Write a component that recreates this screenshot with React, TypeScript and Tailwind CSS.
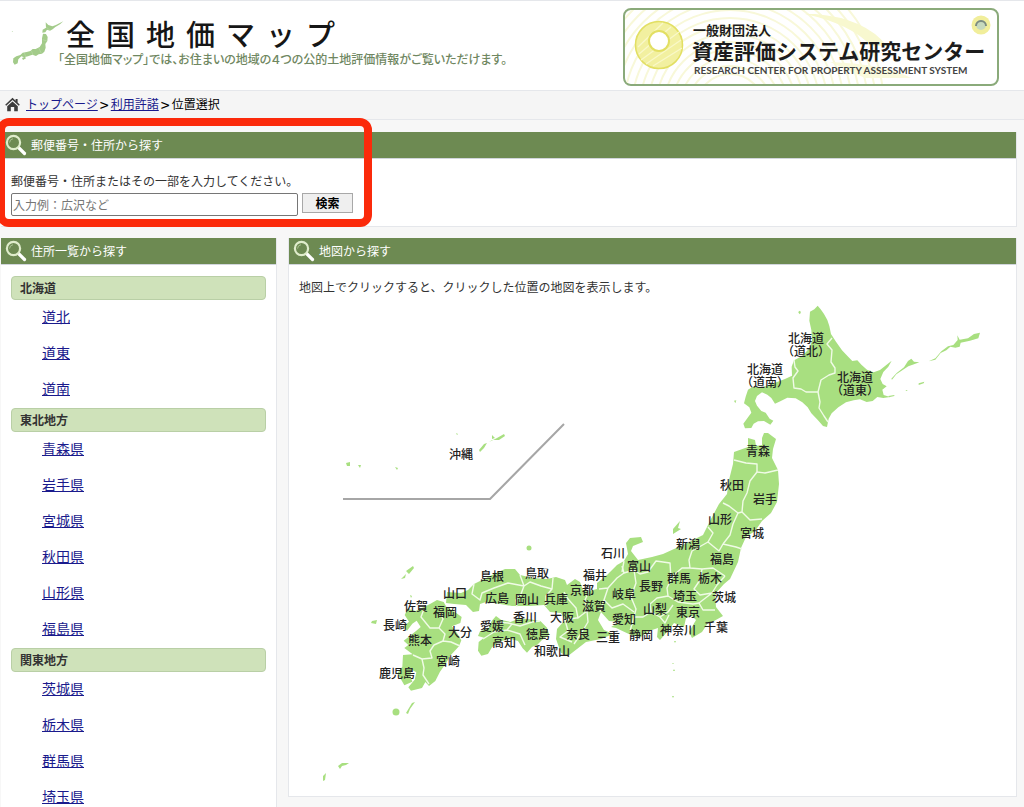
import React from 'react';

const regions = [
  { name: '北海道', areas: ['道北', '道東', '道南'] },
  { name: '東北地方', areas: ['青森県', '岩手県', '宮城県', '秋田県', '山形県', '福島県'] },
  { name: '関東地方', areas: ['茨城県', '栃木県', '群馬県', '埼玉県'] },
];

// label centre on the map canvas; an optional second line goes 13 below
const labels: [string, number, number, string?][] = [
  ['北海道', 806, 337, '（道北）'],
  ['北海道', 765, 368, '（道南）'],
  ['北海道', 855, 376, '（道東）'],
  ['沖縄', 461, 453], ['青森', 758, 450], ['秋田', 732, 484], ['岩手', 765, 498],
  ['山形', 720, 518], ['宮城', 752, 532], ['新潟', 688, 543], ['福島', 722, 558],
  ['石川', 613, 552], ['富山', 639, 565], ['福井', 595, 574], ['長野', 651, 585],
  ['群馬', 679, 577], ['栃木', 710, 577], ['京都', 582, 589], ['岐阜', 624, 593],
  ['埼玉', 685, 595], ['茨城', 724, 596], ['滋賀', 594, 605], ['山梨', 655, 608],
  ['東京', 688, 611], ['愛知', 624, 618], ['千葉', 716, 626], ['神奈川', 678, 629],
  ['静岡', 641, 634], ['三重', 608, 636], ['奈良', 578, 633], ['和歌山', 552, 650],
  ['鳥取', 537, 572], ['島根', 492, 575], ['広島', 497, 597], ['岡山', 527, 598],
  ['兵庫', 556, 598], ['山口', 455, 592], ['香川', 525, 616], ['大阪', 562, 616],
  ['愛媛', 492, 625], ['徳島', 538, 633], ['高知', 504, 641], ['佐賀', 416, 605],
  ['福岡', 445, 611], ['長崎', 395, 624], ['熊本', 420, 639], ['大分', 460, 631],
  ['宮崎', 448, 660], ['鹿児島', 397, 672],
];

const GlassIcon = () => (
  <svg width="22" height="22" viewBox="0 0 22 22" fill="none" aria-hidden="true">
    <path d="M13.5 13.5 L19.5 19.5" stroke="#fff" strokeWidth="3.2" strokeLinecap="round" />
    <circle cx="8.5" cy="8.5" r="6.6" fill="#6d8a52" stroke="#dfeccb" strokeWidth="2.2" />
    <path d="M4.6 8.6 A4 4 0 0 1 8 4.7" stroke="#a9c191" strokeWidth="1" />
  </svg>
);

const PanelTitle = ({ children }: { children: React.ReactNode }) => (
  <h2 className="flex h-[27px] items-center gap-1 border-b border-gray-300 bg-[#6d8a52] pl-1 text-xs font-normal text-white">
    <GlassIcon />
    {children}
  </h2>
);

const SiteLogo = () => (
  <svg width="57" height="48" viewBox="30 20 171 144" aria-hidden="true">
    <g fill="#a3cb8a">
      <path d="M137 36 L145 44 L157 48 L168 44 L178 39 L190 33 L180 42 L166 50 L158 57 L150 61 L141 58 L136 66 L127 67 L128 58 L138 52 Z" />
      <path d="M129 70 L138 71 L143 80 L142 92 L136 101 L137 112 L133 124 L126 130 L116 132 L108 137 L97 133 L84 138 L72 141 L64 138 L55 147 L53 159 L44 163 L39 156 L40 144 L49 138 L61 134 L68 127 L80 125 L91 122 L98 116 L107 116 L119 110 L126 99 L126 84 Z" />
      <path d="M66 143 L75 139 L78 144 L69 149 Z M35 63 L38 62 L38 65 Z" />
    </g>
    <path d="M128 88 L141 92 M116 112 L124 129 M94 121 L99 134 M73 127 L77 139 M138 50 L150 60" stroke="#cfe6c0" fill="none" />
  </svg>
);

const CenterBanner = () => (
  <a
    href="#center"
    className="relative block h-[78px] w-[376px] shrink-0 overflow-hidden rounded-lg border-2 border-[#8aaa7a] bg-white text-[#1c1c1c]"
  >
    <svg className="absolute inset-0" width="372" height="74" viewBox="0 0 372 74" fill="none" aria-hidden="true">
      <g stroke="#f8f8d9" strokeWidth="2">
        {[34, 42, 50, 58, 66, 74, 82, 90, 98, 106, 114, 122, 130, 138, 146, 154].map((r) => (
          <circle key={r} cx="105" cy="98" r={r} />
        ))}
      </g>
      <path d="M190 4 Q240 8 262 36 L246 36 Q226 14 180 4 Z" fill="#f8f8cf" />
      <path d="M205 52 Q260 54 286 68 L240 68 Z" fill="#fafadc" />
      <circle cx="34" cy="35" r="23.5" fill="#f2f0a0" stroke="#e2df63" strokeWidth="1.6" />
      <g stroke="#f9f8c8" strokeWidth="1.3">
        <path d="M14 44 L46 17 M16 50 L54 22 M21 54 L56 30 M28 56 L57 38 M13 37 L38 13" />
      </g>
      <circle cx="34" cy="31" r="10" fill="#fff" stroke="#e2df63" strokeWidth="2" />
      <circle cx="356" cy="15" r="9.5" fill="#f1ee9b" />
      <circle cx="356" cy="15" r="5" fill="#c6d9bd" />
      <path d="M351 16 A5 5 0 0 1 361 16" stroke="#7c8c80" strokeWidth="2" />
    </svg>
    <span className="relative block pl-[68px] pt-3 text-[13px] leading-4 font-bold">一般財団法人</span>
    <span className="relative block pl-[67px] text-[21px] leading-6 font-bold whitespace-nowrap">
      資産評価システム研究センター
    </span>
    <span className="relative block pl-[69px] font-[Lato,sans-serif] text-[10px] leading-4 font-bold whitespace-nowrap text-[#444]">
      RESEARCH CENTER FOR PROPERTY ASSESSMENT SYSTEM
    </span>
  </a>
);

const JapanMap = () => (
  <svg
    className="block w-full"
    viewBox="289 297 727 499"
    role="img"
    aria-label="日本地図"
    strokeLinejoin="round"
  >
    <g fill="#a8df80">
      {/* Hokkaido and the northern islands */}
      <g transform="translate(720 290) scale(.33333)">
        <path d="M293 47 L302 58 L312 72 L322 90 L328 108 L333 132 L348 155 L366 181 L386 202 L397 213 L412 211 L425 225 L441 239 L461 247 L480 240 L498 226 L515 212 L505 230 L490 246 L481 267 L488 282 L500 289 L487 299 L491 315 L510 321 L490 324 L472 321 L458 333 L440 336 L420 328 L401 331 L378 337 L355 352 L335 370 L326 386 L321 411 L309 408 L294 391 L274 370 L263 352 L247 337 L227 325 L202 323 L181 334 L165 341 L154 324 L142 314 L126 307 L111 318 L105 333 L111 347 L124 363 L137 368 L149 386 L160 392 L151 404 L132 393 L114 394 L101 401 L94 414 L75 415 L70 401 L83 383 L94 368 L88 352 L72 340 L77 320 L84 299 L97 291 L128 292 L163 279 L195 267 L216 257 L215 230 L222 211 L247 198 L269 174 L276 150 L274 120 L268 92 L270 65 L283 58 Z" />
        <path d="M514 266 L530 249 L552 232 L564 213 L574 206 L582 215 L598 217 L582 223 L565 229 L548 240 L529 253 L516 269 Z" />
        <path d="M626 214 L646 205 L664 184 L684 169 L700 165 L713 150 L712 136 L719 149 L744 145 L762 132 L780 128 L775 145 L750 152 L722 158 L719 170 L706 173 L691 170 L679 181 L662 189 L646 209 Z" />
        <path d="M596 280 L613 275 L611 280 L596 285 Z M505 318 L523 315 L523 318 L507 322 Z M42 332 L49 331 L46 340 Z M232 43 L235 46 M237 62 L243 65 L240 73 L235 68 Z M556 300 L563 300 L560 303 Z" />
      </g>
      {/* Honshu */}
      <path d="M748 438 L755 440 L756 446 L762 445 L762 438 L764 433 L768 433 L776 439 L773 449 L772 458 L778 470 L779 484 L777 502 L771 513 L762 521 L755 531 L746 537 L741 548 L738 562 L730 579 L724 584 L715 594 L716 607 L723 616 L714 621 L708 623 L702 632 L692 638 L689 632 L696 620 L692 616 L686 618 L684 627 L674 623 L668 631 L660 640 L657 637 L658 628 L649 631 L641 637 L631 635 L616 628 L611 627 L620 622 L609 621 L601 612 L598 620 L604 630 L613 634 L601 639 L586 642 L577 649 L568 656 L561 653 L556 639 L557 629 L565 620 L561 613 L550 612 L544 605 L530 606 L512 606 L500 604 L486 602 L480 604 L479 611 L473 612 L466 605 L454 604 L446 603 L447 592 L461 593 L468 590 L474 584 L482 580 L496 573 L505 569 L515 569 L520 575 L533 578 L547 579 L556 577 L565 580 L567 585 L575 579 L580 582 L583 590 L589 591 L597 589 L597 583 L607 575 L617 565 L624 561 L628 554 L626 543 L630 538 L641 537 L643 542 L633 546 L631 551 L638 560 L652 557 L663 554 L674 549 L687 543 L703 535 L711 519 L719 504 L727 494 L729 480 L733 464 L734 452 L748 447 Z" />
      {/* Shikoku */}
      <path transform="translate(420 540) scale(.33333)" d="M180 274 L206 264 L215 243 L228 228 L244 240 L272 246 L298 235 L330 238 L362 244 L381 263 L388 284 L366 300 L352 314 L336 321 L321 338 L308 325 L294 303 L270 296 L237 305 L216 322 L204 342 L184 347 L174 332 L176 306 L192 293 L174 288 Z" />
      {/* Kyushu */}
      <path transform="translate(360 530) scale(.33333)" d="M190 232 L210 222 L231 210 L251 216 L259 230 L290 250 L305 261 L301 279 L276 289 L293 312 L304 331 L297 349 L272 376 L258 400 L240 425 L226 453 L207 468 L196 456 L186 474 L153 482 L145 472 L164 449 L169 427 L155 419 L151 438 L157 455 L133 466 L121 445 L112 430 L127 410 L129 375 L158 373 L133 354 L145 345 L131 332 L152 316 L169 302 L182 291 L170 272 L157 281 L141 302 L130 290 L147 275 L134 255 L143 236 L167 243 Z" />
      {/* Sado, Tsushima, Okinawa and the small islands */}
      <path d="M673 529 L680 521 L678 528 L681 529 L673 534 Z" />
      <path d="M401 579 L406 574 L405 578 Z M406 571 L413 566 L414 568 L409 574 Z M410 595 L412 596 L411 598 Z" />
      <circle cx="529" cy="548" r="2.5" />
      <circle cx="396" cy="712" r="3.5" />
      <path d="M406 713 L412 703 L415 702 L410 709 L408 714 Z M372 621 L377 620 L376 624 L371 623 Z" />
      <path d="M338 766 L342 763 L349 763 L346 765 L342 766 L340 769 Z M323 776 L326 773 L325 780 L323 781 Z" />
      <path d="M479 450 L484 444 L487 443 L484 448 L480 452 Z M489 442 L497 438 L504 434 L505 436 L499 440 L492 440 Z M492 435 L495 438 L492 439 Z" />
      <path d="M346 463 L350 462 L350 466 L347 466 Z M358 465 L361 465 L360 468 Z M395 467 L398 468 L397 470 Z M456 433 L458 434 L457 435 Z" />
      <path d="M674 641 L676 641 L675 643 Z M673 663 L674 664 L672 664 Z M674 669 L675 671 L673 671 Z M672 696 L674 696 L673 698 Z" />
    </g>
    {/* prefecture borders */}
    <g fill="none" stroke="#f0fbe6" strokeWidth="1.4">
      <path d="M794 360 L795 367 L798 371 L793 378 L794 388 L801 389 L806 392 L818 392 L821 380 L829 375 L835 373 L835 368 L831 362 L832 350 L827 344 L832 338" />
      <path d="M818 392 L820 402 L819 408 L824 416 L828 422" />
      <path d="M734 460 L746 463 L757 464 L757 472 L765 473 L778 470" />
      <path d="M757 472 L750 481 L747 493 L743 501 L742 512 L738 513 L729 506 L723 503" />
      <path d="M742 512 L750 520 L762 519 M738 513 L733 524 L730 535 L723 544 M723 544 L736 547 L742 549 M723 544 L719 551 L708 542 L713 533 L708 527" />
      <path d="M708 542 L692 551 L689 560 L690 568 L702 569 L713 568 L725 576 M690 568 L682 568 L675 574 L671 579 L670 563 L656 561 L648 572 L640 574 L634 570 L624 573 L622 566" />
      <path d="M702 569 L700 580 L694 589 L700 595 L712 593 M725 576 L717 585 L712 593 L699 603 L703 610 L715 610" />
      <path d="M671 579 L667 588 L668 596 L678 602 L693 604 L699 603 M668 596 L657 598 L650 604 L651 612 L660 617 L668 612 L673 605" />
      <path d="M634 570 L636 583 L631 597 L636 609 L634 617 L643 617 L651 612 M660 617 L665 623 L669 615 M634 617 L630 631" />
      <path d="M624 573 L617 578 L608 588 L599 589 M608 588 L604 600 L612 608 L623 604 L634 612 M604 600 L600 612" />
      <path d="M624 561 L622 572" />
      <path d="M589 591 L585 600 L587 611 L578 618 L576 608 L568 599 L564 592 M587 611 L588 622 L582 632 L574 644 M565 620 L576 618 L578 618 M565 620 L568 631 L560 637 L572 642" />
      <path d="M553 578 L552 589 L546 596 L546 606 M552 589 L541 586 L530 582 L524 586 L508 583 L494 588 L482 593 L480 600 L472 594 L474 584 M520 575 L524 586 L521 594 L516 600 L517 607" />
      <path d="M497 622 L508 623 L520 626 L532 622 L540 621 M483 639 L494 632 L507 630 L520 634 L525 645 M507 630 L512 624" />
      <path d="M424 609 L421 617 L430 628 L439 628 L443 619 L440 613 M439 628 L445 634 L443 641 L434 645 L430 651 L432 658 L422 659 L413 655 M443 641 L451 642 L460 646 M422 659 L424 668 L423 675 L429 684" />
    </g>
    <path d="M343 499 H490 L564 424" fill="none" stroke="#a6a6a6" strokeWidth="2" />
    <g fill="#222" fontSize="12" fontWeight="500" textAnchor="middle" dominantBaseline="central">
      {labels.map(([name, x, y, second]) => (
        <text key={`${name}-${x}`} x={x} y={y}>
          {name}
          {second && <tspan x={x} dy="13">{second}</tspan>}
        </text>
      ))}
    </g>
  </svg>
);

const App: React.FC = () => {
  return (
    <div className="min-h-screen bg-[#f7f7f7] font-['Noto_Sans_CJK_JP',sans-serif] text-xs text-[#333]">
      <header className="flex h-[91px] items-start justify-between border-t border-b border-gray-200 bg-white pr-[25px] pl-2.5">
        <div className="flex pt-3.5">
          <div className="w-12 pt-0.5">
            <SiteLogo />
          </div>
          <div>
            <h1 className="pl-2 text-[29px] leading-9 font-medium whitespace-nowrap text-[#161616]">
              {'全国地価マップ'.split('').map((c) => (
                <span key={c} className="mr-[11px]">
                  {c}
                </span>
              ))}
            </h1>
            <p className="text-xs leading-4 font-medium whitespace-nowrap text-[#6f8761] [font-feature-settings:'palt']">
              「全国地価マップ」では、お住まいの地域の４つの公的土地評価情報がご覧いただけます。
            </p>
          </div>
        </div>
        <div className="pt-[7px]">
          <CenterBanner />
        </div>
      </header>

      <nav className="flex h-[29px] items-center border-b border-gray-200 bg-[#f5f5f5] pb-0.5 pl-[5px] text-black">
        <svg className="mr-1.5" width="15" height="15" viewBox="0 0 15 15" fill="#3c3c3c" aria-hidden="true">
          <path d="M7.5 .8 L10.6 3.7 V2 H12.6 V5.6 L14.8 7.7 L13.8 8.8 L7.5 3 L1.2 8.8 L.2 7.7 Z" />
          <path d="M7.5 4.4 L12.8 9.3 V14.2 H9.2 V10 H5.8 V14.2 H2.2 V9.3 Z" />
        </svg>
        <a href="#top" className="text-[#1a1a8c] underline">トップページ</a>
        <span className="w-[13px] text-center text-base leading-4">&gt;</span>
        <a href="#license" className="text-[#1a1a8c] underline">利用許諾</a>
        <span className="w-[13px] text-center text-base leading-4">&gt;</span>
        <span>位置選択</span>
      </nav>

      <main className="flex flex-col gap-[11px] pt-3 pr-[7px] pl-px">
        <section className="relative border-r border-b border-gray-200 bg-white">
          <PanelTitle>郵便番号・住所から探す</PanelTitle>
          <form className="px-2.5 pt-3 pb-2.5" onSubmit={(e) => e.preventDefault()}>
            <label htmlFor="keyword" className="block leading-5">
              郵便番号・住所またはその一部を入力してください。
            </label>
            <div className="flex items-start gap-1 pt-0.5">
              <input
                id="keyword"
                type="text"
                autoFocus
                placeholder="入力例：広沢など"
                className="h-[23px] w-[287px] rounded-xs border border-[#767676] bg-white px-px outline-none placeholder:text-[#767676]"
              />
              <button type="submit" className="h-5 w-[51px] border border-[#a8a8a8] bg-[#efefef] leading-4 font-bold text-black">
                検索
              </button>
            </div>
          </form>
          {/* highlight frame around the search box */}
          <div className="pointer-events-none absolute -top-3.5 -left-1 h-[109px] w-[375px] rounded-xl border-8 border-[#fb2a0b]" />
        </section>

        <div className="grid grid-cols-[276px_1fr] items-start gap-[11px]">
          <section className="border-r border-b border-gray-200 bg-white">
            <PanelTitle>住所一覧から探す</PanelTitle>
            <div className="px-2.5 pt-[11px]">
              {regions.map((region) => (
                <div key={region.name}>
                  <h3 className="h-6 rounded-sm border border-[#b9cfa6] bg-[#cfe2ba] pl-2 leading-[22px] font-bold">
                    {region.name}
                  </h3>
                  <ul className="pl-[31px] text-sm">
                    {region.areas.map((area) => (
                      <li key={area} className="pb-1 leading-8">
                        <a href={`#${area}`} className="text-[#1a1a8c] underline">{area}</a>
                      </li>
                    ))}
                  </ul>
                </div>
              ))}
            </div>
          </section>

          <section className="border-x border-b border-gray-200 bg-white">
            <PanelTitle>地図から探す</PanelTitle>
            <p className="px-2.5 pt-3 leading-5">地図上でクリックすると、クリックした位置の地図を表示します。</p>
            <JapanMap />
          </section>
        </div>
      </main>
    </div>
  );
};

export default App;
